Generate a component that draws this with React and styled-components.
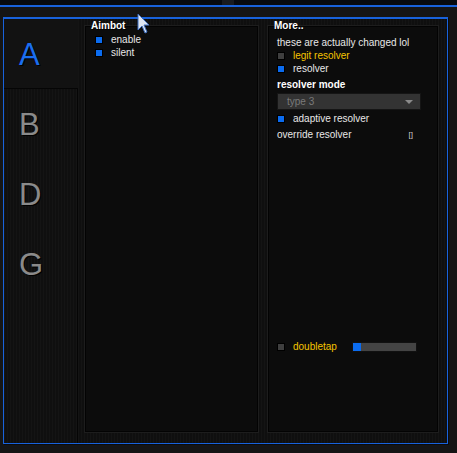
import * as React from "react";
import styled, { createGlobalStyle } from "styled-components";

const blue = "#0b6cf0";
const frameBlue = "#1862dc";
const stripes = `repeating-linear-gradient(90deg, #141414 0px, #141414 1px, #0f0f0f 1px, #0f0f0f 3px)`;

const GlobalStyle = createGlobalStyle`
  html, body {
    margin: 0;
    padding: 0;
    background: #151515;
    width: 457px;
    height: 453px;
    overflow: hidden;
  }
  body {
    font-family: "Liberation Sans", Arial, sans-serif;
    font-size: 10px;
    color: #e6e6e6;
  }
`;

const Page = styled.div`
  position: relative;
  width: 457px;
  height: 453px;
  background: #151515;
`;

const TopBar = styled.div`
  display: flex;
  height: 5px;
  background: #070a0f;
  border-bottom: 2px solid ${frameBlue};
`;

const TopKnob = styled.div`
  margin-left: 222px;
  width: 12px;
  background: #181b20;
`;

const Gap = styled.div`
  height: 10px;
`;

const Frame = styled.div`
  display: flex;
  margin-left: 3px;
  width: 443px;
  height: 424px;
  border: 1px solid ${frameBlue};
  border-top-width: 2px;
  box-shadow: 1px 1px 0 #0b0b0b;
`;

const Sidebar = styled.div`
  display: flex;
  flex-direction: column;
  width: 74px;
  background: #121212;
`;

const ActiveTab = styled.div`
  display: flex;
  align-items: center;
  height: 70px;
  padding-left: 15px;
  flex-shrink: 0;
`;

const TabList = styled.div`
  flex: 1;
  display: flex;
  flex-direction: column;
  background: ${stripes};
  border-top: 1px solid #050505;
  border-right: 1px solid #050505;
  margin-top: -1px;
`;

const Tab = styled.div`
  display: flex;
  align-items: center;
  height: 70px;
  padding-left: 15px;
`;

const TabLetter = styled.span`
  font-family: "Liberation Sans", Arial, sans-serif;
  font-size: 31px;
  line-height: 31px;
  color: ${(p) => (p.active ? "#1a6ef0" : "#8a8a8a")};
  text-shadow: 1px 1px 0 #000;
`;

const Content = styled.div`
  flex: 1;
  display: flex;
  gap: 10px;
  padding: 7px 9px 11px 7px;
  background: ${stripes};
`;

const Panel = styled.div`
  display: flex;
  flex-direction: column;
  width: ${(p) => p.w}px;
  background: #0c0c0c;
  border: 1px solid #030303;
  box-shadow: 0 0 0 1px #1d1d1d;
`;

const PanelTitle = styled.div`
  margin: -7px 0 0 5px;
  height: 12px;
  line-height: 12px;
  font-weight: bold;
  color: #fff;
  text-shadow: 1px 1px 0 #000;
`;

const Items = styled.div`
  display: flex;
  flex-direction: column;
  padding: ${(p) => p.top}px 0 0 ${(p) => p.left}px;
`;

const Row = styled.div`
  display: flex;
  align-items: center;
  height: 13px;
  margin-top: ${(p) => p.mt || 0}px;
`;

const Box = styled.span`
  width: 6px;
  height: 6px;
  flex-shrink: 0;
  margin-left: ${(p) => p.indent || 0}px;
  margin-right: 9px;
  background: ${(p) => (p.on ? blue : "#3f3f3f")};
  box-shadow: 0 0 0 1px #000;
`;

const Label = styled.span`
  color: ${(p) => (p.warn ? "#f5c400" : "#e8e8e8")};
  white-space: nowrap;
`;

const Heading = styled.span`
  font-weight: bold;
  color: #fff;
  white-space: nowrap;
`;

const Bind = styled.span`
  margin-left: auto;
  margin-right: 24px;
  font-size: 8px;
  color: #cfcfcf;
`;

const Select = styled.div`
  display: flex;
  align-items: center;
  justify-content: space-between;
  box-sizing: border-box;
  width: 144px;
  height: 17px;
  margin-top: 2px;
  padding: 0 7px 0 9px;
  background: #333333;
  border: 1px solid #151515;
  color: #7a7a7a;
`;

const Caret = styled.span`
  width: 0;
  height: 0;
  border-left: 4px solid transparent;
  border-right: 4px solid transparent;
  border-top: 4px solid #8a8a8a;
`;

const Slider = styled.div`
  display: flex;
  box-sizing: border-box;
  width: 65px;
  height: 10px;
  margin-left: 15px;
  background: #444;
  border: 1px solid #111;
`;

const SliderFill = styled.div`
  background: ${blue};
`;

const Cursor = styled.svg`
  position: absolute;
  left: 137px;
  top: 13px;
`;

const Check = ({ on, warn, label, indent }) => (
  <Row>
    <Box on={on} indent={indent} />
    <Label warn={warn}>{label}</Label>
  </Row>
);

const App = () => (
  <Page>
    <GlobalStyle />
    <TopBar>
      <TopKnob />
    </TopBar>
    <Gap />
    <Frame>
      <Sidebar>
        <ActiveTab>
          <TabLetter active>A</TabLetter>
        </ActiveTab>
        <TabList>
          {["B", "D", "G"].map((t) => (
            <Tab key={t}>
              <TabLetter>{t}</TabLetter>
            </Tab>
          ))}
        </TabList>
      </Sidebar>
      <Content>
        <Panel w={171}>
          <PanelTitle>Aimbot</PanelTitle>
          <Items top={1} left={10}>
            <Check on label="enable" />
            <Check on label="silent" />
          </Items>
        </Panel>
        <Panel w={168}>
          <PanelTitle>More..</PanelTitle>
          <Items top={4} left={8}>
            <Row>
              <Label>these are actually changed lol</Label>
            </Row>
            <Check warn label="legit resolver" indent={1} />
            <Check on label="resolver" indent={1} />
            <Row mt={3}>
              <Heading>resolver mode</Heading>
            </Row>
            <Select>
              <span>type 3</span>
              <Caret />
            </Select>
            <Row mt={2}>
              <Box on indent={1} />
              <Label>adaptive resolver</Label>
            </Row>
            <Row mt={3}>
              <Label>override resolver</Label>
              <Bind>[]</Bind>
            </Row>
            <Row mt={199}>
              <Box indent={1} />
              <Label warn>doubletap</Label>
              <Slider>
                <SliderFill style={{ width: `${(8 / 63) * 100}%` }} />
              </Slider>
            </Row>
          </Items>
        </Panel>
      </Content>
    </Frame>
    <Cursor width="16" height="22" viewBox="0 0 16 22">
      <path
        d="M1 1 L1 17 L5 13 L8 20 L10 19 L7 12 L12 12 Z"
        fill="#dde5f2"
        stroke="#3f6fc0"
        strokeWidth="1"
        strokeLinejoin="round"
      />
    </Cursor>
  </Page>
);

export default App;
